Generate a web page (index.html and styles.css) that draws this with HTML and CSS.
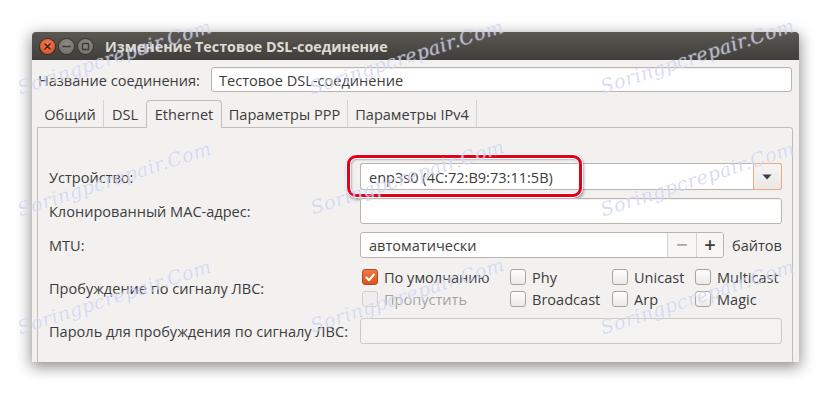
FILE: index.html
```html
<!DOCTYPE html>
<html lang="ru">
<head>
<meta charset="utf-8">
<title>Изменение Тестовое DSL-соединение</title>
<link rel="stylesheet" href="styles.css">
</head>
<body>
<div class="window">
  <div class="titlebar">
    <div class="wbtns">
      <span class="wbtn close"><svg width="15" height="15" viewBox="0 0 15 15"><path d="M5 5 L10 10 M10 5 L5 10" stroke="#3a2a22" stroke-width="1.6" stroke-linecap="round"/></svg></span>
      <span class="wbtn grey"><svg width="15" height="15" viewBox="0 0 15 15"><path d="M4 7.5 H11" stroke="#3b3a36" stroke-width="1.6" stroke-linecap="round"/></svg></span>
      <span class="wbtn grey"><svg width="15" height="15" viewBox="0 0 15 15"><rect x="4.5" y="4.5" width="6" height="6" rx="0.8" fill="none" stroke="#3b3a36" stroke-width="1.4"/></svg></span>
    </div>
    <div class="title">Изменение Тестовое DSL-соединение</div>
  </div>
  <div class="content">
    <div class="name-row">
      <span class="name-label">Название соединения:</span>
      <div class="entry name-entry">Тестовое DSL-соединение</div>
    </div>
    <div class="notebook">
      <div class="tabs">
        <div class="tab t1">Общий</div>
        <div class="tab t2">DSL</div>
        <div class="tab t3 active">Ethernet</div>
        <div class="tab t4">Параметры PPP</div>
        <div class="tab t5">Параметры IPv4</div>
      </div>
      <div class="panel">
        <div class="form">
          <span class="lbl">Устройство:</span>
          <div class="field">
            <div class="combo">
              <div class="combo-text">enp3s0 (4C:72:B9:73:11:5B)</div>
              <div class="combo-btn"><svg width="10" height="6" viewBox="0 0 10 6"><path d="M0.5 0.5 H9.5 L5 5.5 Z" fill="#3c3c3c"/></svg></div>
            </div>
            <div class="highlight"></div>
          </div>

          <span class="lbl">Клонированный MAC-адрес:</span>
          <div class="field"><div class="entry wide"></div></div>

          <span class="lbl">MTU:</span>
          <div class="field mtu">
            <div class="spin">
              <div class="spin-text">автоматически</div>
              <div class="spin-btn off">−</div>
              <div class="spin-btn">+</div>
            </div>
            <span class="unit">байтов</span>
          </div>

          <span class="lbl">Пробуждение по сигналу ЛВС:</span>
          <div class="checks">
            <label class="chk"><span class="box on"><svg width="15" height="15" viewBox="0 0 15 15"><path d="M3.6 7.6 L6.4 10.4 L11.6 4.4" fill="none" stroke="#fff" stroke-width="2.2" stroke-linecap="round" stroke-linejoin="round"/></svg></span>По умолчанию</label>
            <label class="chk"><span class="box"></span>Phy</label>
            <label class="chk"><span class="box"></span>Unicast</label>
            <label class="chk"><span class="box"></span>Multicast</label>
            <label class="chk disabled"><span class="box"></span>Пропустить</label>
            <label class="chk"><span class="box"></span>Broadcast</label>
            <label class="chk"><span class="box"></span>Arp</label>
            <label class="chk"><span class="box"></span>Magic</label>
          </div>

          <span class="lbl">Пароль для пробуждения по сигналу ЛВС:</span>
          <div class="field"><div class="entry wide disabled-entry"></div></div>
        </div>
      </div>
    </div>
  </div>
</div>
<div class="watermarks" aria-hidden="true">
  <span class="wm w1">Soringpcrepair.Com</span>
  <span class="wm w2">Soringpcrepair.Com</span>
  <span class="wm w3">Soringpcrepair.Com</span>
  <span class="wm w4">Soringpcrepair.Com</span>
  <span class="wm w5">Soringpcrepair.Com</span>
  <span class="wm w6">Soringpcrepair.Com</span>
  <span class="wm w7">Soringpcrepair.Com</span>
  <span class="wm w8">Soringpcrepair.Com</span>
  <span class="wm w9">Soringpcrepair.Com</span>
</div>
</body>
</html>
```

FILE: styles.css
```css
* { box-sizing: border-box; }
html, body { margin: 0; padding: 0; }
body {
  background: #ffffff;
  width: 831px;
  height: 395px;
  overflow: hidden;
  font-family: "Open Sans", "Noto Sans", "DejaVu Sans", sans-serif;
  font-size: 14.55px;
  color: #3c3c3c;
  position: relative;
}

.window {
  margin: 32px 0 0 32px;
  width: 767px;
  height: 330px;
  background: #f2f1f0;
  box-shadow: 0 4px 14px 1px rgba(0,0,0,0.45);
  display: flex;
  flex-direction: column;
}

.titlebar {
  height: 28px;
  flex: none;
  background: linear-gradient(#5b5852, #3f3e3a);
  border-radius: 4px 4px 0 0;
  display: flex;
  align-items: center;
  padding-left: 8px;
}
.wbtns { display: flex; gap: 4px; }
.wbtn {
  width: 15px; height: 15px; border-radius: 50%;
  display: flex; align-items: center; justify-content: center;
}
.wbtn svg { display: block; }
.wbtn.close {
  background: radial-gradient(circle at 50% 35%, #f47a4d, #d94b1f);
  box-shadow: 0 0 0 1px rgba(30,20,15,0.45);
}
.wbtn.grey {
  background: radial-gradient(circle at 50% 35%, #8f8c85, #6d6a63);
  box-shadow: 0 0 0 1px rgba(30,30,28,0.45);
}
.title {
  margin-left: 12px;
  color: #dfdbd2;
  font-weight: 700;
  font-size: 14.3px;
}

.content {
  flex: 1;
  display: flex;
  flex-direction: column;
}

.name-row {
  display: flex;
  align-items: center;
  padding: 7px 7px 0 6px;
}
.name-label { width: 173px; flex: none; }
.entry {
  background: #ffffff;
  border: 1px solid #b9b4ae;
  border-radius: 3px;
  box-shadow: inset 0 1px 1px rgba(0,0,0,0.06);
}
.name-entry {
  flex: 1;
  height: 25px;
  display: flex;
  align-items: center;
  padding-left: 7px;
}

.notebook {
  flex: 1;
  margin: 8px 6px 0 5px;
  display: flex;
  flex-direction: column;
}
.tabs {
  display: flex;
  height: 27px;
  position: relative;
  z-index: 1;
}
.tab {
  height: 27px;
  display: flex;
  align-items: center;
  justify-content: center;
  border-right: 1px solid #d8d3cd;
}
.t1 { width: 67px; }
.t2 { width: 42px; border-right: none; }
.t3 { width: 76px; }
.t4 { width: 126px; }
.t5 { width: 129px; }
.tab.active {
  height: 28px;
  background: #f2f1f0;
  border: 1px solid #c2bdb7;
  border-bottom: none;
  border-radius: 4px 4px 0 0;
  padding-bottom: 2px;
}

.panel {
  flex: 1;
  border: 1px solid #c2bdb7;
  border-bottom: none;
  border-radius: 0 3px 0 0;
  padding: 35px 12px 0 11px;
}

.form {
  display: grid;
  grid-template-columns: 311px 1fr;
  grid-template-rows: 27px 26px 26px 44px 26px;
  row-gap: 8px;
  align-items: center;
}
.lbl { align-self: center; white-space: nowrap; }
.field { position: relative; height: 100%; display: flex; align-items: stretch; }
.entry.wide { flex: 1; }
.disabled-entry { background: #f4f3f2; border-color: #cdc8c2; box-shadow: none; }

.combo {
  flex: 1;
  display: flex;
  background: #fff;
  border: 1px solid #b9b4ae;
  border-right: none;
  border-radius: 3px;
}
.combo-text {
  flex: 1;
  display: flex;
  align-items: center;
  padding-left: 8px;
}
.combo-btn {
  width: 29px;
  margin: -1px 0;
  border: 1px solid #f2a878;
  border-radius: 0 3px 3px 0;
  background: linear-gradient(#f6f5f4, #eae8e6);
  display: flex;
  align-items: center;
  justify-content: center;
}
.combo-btn svg { display: block; }

.highlight {
  position: absolute;
  left: -13px;
  top: -8px;
  width: 235px;
  height: 42px;
  border: 3px solid #e3001b;
  border-radius: 9px;
  box-shadow: 0 0 0 1px #ffffff, 1px 2px 3px 1px rgba(0,0,0,0.35), inset 0 0 0 1px #ffffff, inset 1px 1px 2px 1px rgba(0,0,0,0.25);
  pointer-events: none;
}

.mtu { align-items: stretch; }
.spin {
  width: 364px;
  display: flex;
  background: #fff;
  border: 1px solid #b9b4ae;
  border-radius: 3px;
}
.spin-text {
  flex: 1;
  display: flex;
  align-items: center;
  padding-left: 8px;
}
.spin-btn {
  width: 29px;
  border-left: 1px solid #d6d2cd;
  display: flex;
  align-items: center;
  justify-content: center;
  font-size: 20px;
  font-weight: 600;
  color: #3c3c3c;
  background: #f7f6f5;
  line-height: 1;
}
.spin-btn:last-child { border-radius: 0 2px 2px 0; width: 27px; }
.spin-btn.off { color: #aaa7a2; }
.unit { margin-left: 8px; align-self: center; }

.checks {
  display: grid;
  grid-template-columns: 148px 102px 83px auto;
  grid-template-rows: 22px 22px;
  padding-left: 2px;
  align-self: stretch;
}
.chk {
  display: flex;
  align-items: center;
  gap: 6px;
  white-space: nowrap;
}
.box {
  width: 16px; height: 16px;
  flex: none;
  border: 1px solid #a9a49e;
  border-radius: 3px;
  background: linear-gradient(#fdfdfd, #eceae8);
  display: flex;
  align-items: center;
  justify-content: center;
}
.box svg { display: block; }
.box.on {
  background: linear-gradient(#ef7a48, #d9541f);
  border-color: #b3491f;
}
.chk.disabled { color: #a6a39e; }
.chk.disabled .box { border-color: #d3cfca; background: #efeeec; }

.watermarks {
  position: absolute;
  inset: 0;
  pointer-events: none;
}
.wm {
  position: absolute;
  width: 200px;
  margin-left: -100px;
  margin-top: -14px;
  text-align: center;
  font-family: "DejaVu Serif", serif;
  font-style: italic;
  font-size: 19px;
  letter-spacing: 0.5px;
  color: rgba(150,162,225,0.38);
  text-shadow: 0 0 1px rgba(255,255,255,0.8);
  transform: rotate(-18deg);
  white-space: nowrap;
}
.w1 { left: 113px; top: 60px; }
.w2 { left: 405px; top: 60px; }
.w3 { left: 696px; top: 59px; }
.w4 { left: 113px; top: 182px; }
.w5 { left: 406px; top: 180px; }
.w6 { left: 696px; top: 182px; }
.w7 { left: 113px; top: 300px; }
.w8 { left: 406px; top: 298px; }
.w9 { left: 696px; top: 300px; }
```
